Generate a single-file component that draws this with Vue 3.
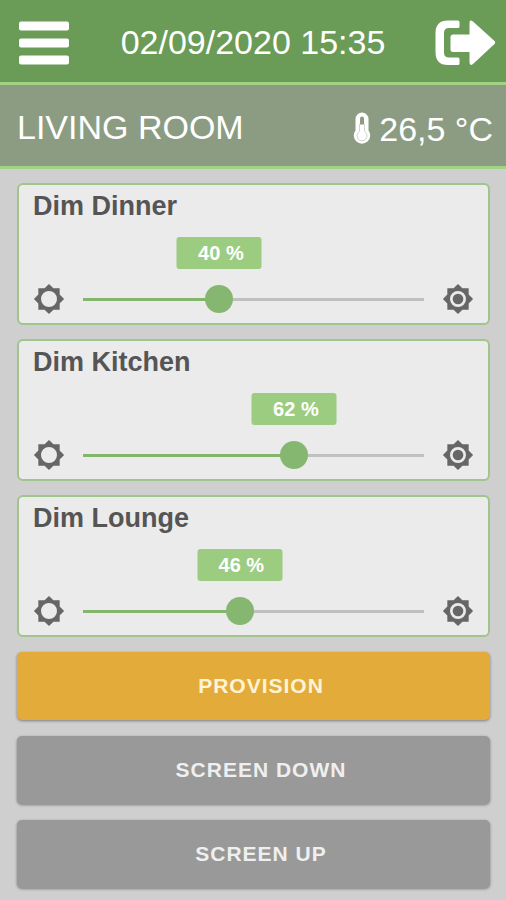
<script setup>
import { reactive } from 'vue'

const dimmers = reactive([
  { id: 'dinner', name: 'Dim Dinner', value: 40 },
  { id: 'kitchen', name: 'Dim Kitchen', value: 62 },
  { id: 'lounge', name: 'Dim Lounge', value: 46 }
])

const scenes = [
  { name: 'PROVISION', active: true },
  { name: 'SCREEN DOWN', active: false },
  { name: 'SCREEN UP', active: false }
]
</script>

<template>
  <div class="app">
    <header class="topbar">
      <button class="icon-button" type="button" aria-label="Menu">
        <svg width="50" height="44" viewBox="0 0 50 44" fill="currentColor">
          <rect x="0" y="0.5" width="50" height="9" rx="2" />
          <rect x="0" y="17.5" width="50" height="9" rx="2" />
          <rect x="0" y="34.5" width="50" height="9" rx="2" />
        </svg>
      </button>
      <time class="clock">02/09/2020 15:35</time>
      <button class="icon-button" type="button" aria-label="Log out">
        <svg width="61" height="46" viewBox="0 0 61 46" fill="currentColor">
          <path d="M23 0.5Q24.500 0.500 24.500 2V6.500Q24.500 8 23 8H14Q9 8 9 13V32.500Q9 37.500 14 37.500H23Q24.500 37.500 24.500 39V43.500Q24.500 45 23 45H13Q0.500 45 0.500 32V13Q0.500 0.500 13 0.500Z" />
          <path d="M18 14.500H34.500V3Q34.500 -1 38 1.500L59.500 21Q61 22.500 59.500 24L38 44Q34.500 46.500 34.500 42V32H18Q15.500 32 15.500 29.500V17Q15.500 14.500 18 14.500Z" />
        </svg>
      </button>
    </header>

    <section class="roombar">
      <h1 class="room">LIVING ROOM</h1>
      <p class="temperature">
        <svg class="thermometer" width="18" height="34" viewBox="0 0 18 34" aria-hidden="true">
          <path d="M2.500 8A6.500 6.500 0 0 1 15.500 8V19.500A8.200 8.200 0 1 1 2.500 19.500Z" fill="currentColor" />
          <path d="M7 7.500A2 2 0 0 1 11 7.500V13.500H7Z" fill="#8c9c82" />
          <path d="M6.500 13V20.500A5 5 0 1 0 11.500 20.500V13" fill="none" stroke="#cfd7ca" stroke-width="1" />
        </svg>
        <span>26,5 °C</span>
      </p>
    </section>

    <main class="controls">
      <section v-for="d in dimmers" :key="d.id" class="card">
        <label class="title" :for="d.id">{{ d.name }}</label>
        <div class="row">
          <svg class="sun" viewBox="0 0 24 24" aria-hidden="true">
            <path d="M12,18A6,6 0 0,1 6,12A6,6 0 0,1 12,6A6,6 0 0,1 18,12A6,6 0 0,1 12,18M20,15.31L23.31,12L20,8.69V4H15.31L12,0.69L8.69,4H4V8.69L0.69,12L4,15.31V20H8.69L12,23.31L15.31,20H20V15.31Z" />
          </svg>
          <div class="slider" :style="{ '--level': d.value / 100 }">
            <output class="bubble" :for="d.id">{{ d.value }} %</output>
            <input :id="d.id" v-model.number="d.value" class="range" type="range" min="0" max="100" />
          </div>
          <svg class="sun" viewBox="0 0 24 24" aria-hidden="true">
            <path d="M12,18A6,6 0 0,1 6,12A6,6 0 0,1 12,6A6,6 0 0,1 18,12A6,6 0 0,1 12,18M20,15.31L23.31,12L20,8.69V4H15.31L12,0.69L8.69,4H4V8.69L0.69,12L4,15.31V20H8.69L12,23.31L15.31,20H20V15.31Z" />
            <circle cx="12" cy="12" r="4" />
          </svg>
        </div>
      </section>

      <div class="scenes">
        <button
          v-for="s in scenes"
          :key="s.name"
          type="button"
          class="scene"
          :class="{ active: s.active }"
        >{{ s.name }}</button>
      </div>
    </main>
  </div>
</template>

<style>
body {
  margin: 0;
  background: #cfcfcf;
}
</style>

<style scoped>
.app {
  font-family: "Liberation Sans", Arial, sans-serif;
  color: #fff;
}

.topbar,
.roombar {
  display: flex;
  align-items: center;
  justify-content: space-between;
  box-sizing: border-box;
  border-bottom: 3px solid #a0d484;
  font-size: 34px;
  line-height: 40px;
}

.topbar {
  min-height: 85px;
  padding: 4px 10px 0 19px;
  background: #6a9b57;
}

.clock {
  padding: 0 0 2px 2px;
}

.roombar {
  min-height: 84px;
  padding: 2px 13px 0 17px;
  background: #8c9c82;
}

.icon-button {
  display: flex;
  padding: 0;
  border: 0;
  background: none;
  color: inherit;
  cursor: pointer;
}

.room {
  margin: 0;
  font-size: 34px;
  font-weight: 400;
}

.temperature {
  display: flex;
  align-items: center;
  gap: 8px;
  margin: 0;
  padding-top: 4px;
}

.thermometer {
  margin-bottom: 2px;
}

.controls {
  display: flex;
  flex-direction: column;
  gap: 14px;
  padding: 14px 16px 11px 17px;
}

.card {
  padding: 5px 14px 8px;
  border: 2px solid #9fc48c;
  border-radius: 6px;
  background: #ebebeb;
}

.title {
  display: block;
  color: #555;
  font-size: 27px;
  font-weight: 700;
  line-height: 32px;
}

.row {
  display: flex;
  align-items: flex-end;
  gap: 4px;
  padding-top: 15px;
}

.sun {
  flex: none;
  width: 32px;
  height: 32px;
  fill: #666;
}

.slider {
  position: relative;
  flex: 1;
  min-width: 0;
  padding-top: 46px;
}

.bubble {
  position: absolute;
  top: 0;
  left: calc(14px + (100% - 28px) * var(--level));
  box-sizing: border-box;
  width: 85px;
  padding-left: 3px;
  border-radius: 3px;
  background: #9ccc80;
  font-size: 20px;
  font-weight: 700;
  line-height: 32px;
  text-align: center;
  transform: translateX(-50%);
}

.range {
  display: block;
  width: 100%;
  height: 32px;
  margin: 0;
  appearance: none;
  background:
    linear-gradient(#83b56b, #83b56b) 14px 50% / calc((100% - 28px) * var(--level)) 3px no-repeat,
    linear-gradient(#c0c0c0, #c0c0c0) 50% 50% / calc(100% - 28px) 3px no-repeat;
  cursor: pointer;
}

.range::-webkit-slider-thumb {
  appearance: none;
  width: 28px;
  height: 28px;
  border: 0;
  border-radius: 50%;
  background: #86b771;
}

.scenes {
  display: flex;
  flex-direction: column;
  gap: 16px;
  padding-top: 1px;
}

.scene {
  min-height: 68px;
  padding: 0 0 0 15px;
  border: 0;
  border-radius: 5px;
  background: #999;
  box-shadow: 0 1px 3px rgba(0, 0, 0, 0.4);
  color: #efefef;
  font-family: inherit;
  font-size: 21px;
  font-weight: 700;
  letter-spacing: 1px;
  cursor: pointer;
}

.scene.active {
  background: #e3ac3a;
  color: #fff3d6;
}
</style>
